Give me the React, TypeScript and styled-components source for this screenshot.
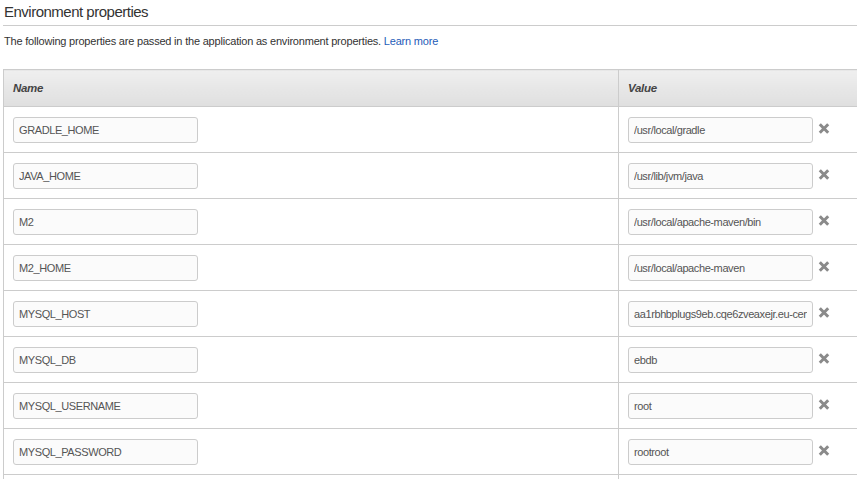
import React from "react";
import styled, { createGlobalStyle } from "styled-components";

const GlobalStyle = createGlobalStyle`
  html, body {
    margin: 0;
    padding: 0;
    overflow: hidden;
    background: #fff;
  }
  body {
    font-family: "Liberation Sans Narrow", "Liberation Sans", Arial, sans-serif;
    color: #333;
  }
`;

const Page = styled.div`
  padding: 0 0 0 3px;
  width: 900px;
`;

const Heading = styled.h2`
  margin: 0;
  padding: 3px 0 5px 1px;
  font-size: 15px;
  letter-spacing: -0.5px;
  font-weight: normal;
  line-height: 17px;
  color: #333;
  border-bottom: 1px solid #cccccc;
`;

const Intro = styled.p`
  margin: 0;
  padding: 7px 0 0 1px;
  height: 36px;
  font-size: 11px;
  letter-spacing: -0.2px;
  line-height: 16px;
  color: #333;
`;

const LearnMore = styled.a`
  color: #1f5db8;
  text-decoration: none;
`;

const Table = styled.table`
  border-collapse: collapse;
  width: 880px;
  border: 1px solid #cccccc;
`;

const HeadCell = styled.th<{ $first?: boolean }>`
  height: 36px;
  padding: 0 10px 0 9px;
  text-align: left;
  font-size: 11.5px;
  letter-spacing: -0.3px;
  font-weight: bold;
  font-style: italic;
  color: #444;
  background: linear-gradient(#efefef, #dfdfdf);
  border-bottom: 1px solid #cccccc;
  border-right: ${(p) => (p.$first ? "1px solid #cccccc" : "none")};
  width: ${(p) => (p.$first ? "595px" : "auto")};
`;

const Row = styled.tr`
  border-bottom: 1px solid #cccccc;
`;

const Cell = styled.td<{ $first?: boolean }>`
  height: 46px;
  padding: 0 10px 0 9px;
  box-sizing: border-box;
  vertical-align: middle;
  border-right: ${(p) => (p.$first ? "1px solid #cccccc" : "none")};
`;

const ValueWrap = styled.div`
  display: flex;
  align-items: center;
  gap: 5px;
`;

const Field = styled.input`
  box-sizing: border-box;
  width: 185px;
  height: 26px;
  padding: 0 5px;
  border: 1px solid #cccccc;
  border-radius: 3px;
  background: #fbfbfb;
  font-family: "Liberation Sans Narrow", "Liberation Sans", Arial, sans-serif;
  font-size: 11px;
  letter-spacing: -0.4px;
  color: #555;
  outline: none;
`;

const RemoveButton = styled.button`
  display: flex;
  align-items: center;
  justify-content: center;
  width: 12px;
  height: 12px;
  padding: 0;
  margin-top: -2px;
  border: none;
  background: none;
  cursor: pointer;
`;

const RemoveIcon = () => (
  <svg width="12" height="11" viewBox="0 0 12 11">
    <path d="M1.8 1.3 L10.2 9.7 M10.2 1.3 L1.8 9.7" stroke="#8a8a8a" strokeWidth="3" />
  </svg>
);

const props: [string, string][] = [
  ["GRADLE_HOME", "/usr/local/gradle"],
  ["JAVA_HOME", "/usr/lib/jvm/java"],
  ["M2", "/usr/local/apache-maven/bin"],
  ["M2_HOME", "/usr/local/apache-maven"],
  ["MYSQL_HOST", "aa1rbhbplugs9eb.cqe6zveaxejr.eu-central-1.rds.amazonaws.com"],
  ["MYSQL_DB", "ebdb"],
  ["MYSQL_USERNAME", "root"],
  ["MYSQL_PASSWORD", "rootroot"],
  ["", ""],
];

export default function App() {
  return (
    <Page>
      <GlobalStyle />
      <Heading>Environment properties</Heading>
      <Intro>
        The following properties are passed in the application as environment properties.{" "}
        <LearnMore href="#">Learn more</LearnMore>
      </Intro>
      <Table>
        <thead>
          <tr>
            <HeadCell $first>Name</HeadCell>
            <HeadCell>Value</HeadCell>
          </tr>
        </thead>
        <tbody>
          {props.map(([name, value], i) => (
            <Row key={i}>
              <Cell $first>
                <Field defaultValue={name} />
              </Cell>
              <Cell>
                <ValueWrap>
                  <Field defaultValue={value} />
                  <RemoveButton>
                    <RemoveIcon />
                  </RemoveButton>
                </ValueWrap>
              </Cell>
            </Row>
          ))}
        </tbody>
      </Table>
    </Page>
  );
}
